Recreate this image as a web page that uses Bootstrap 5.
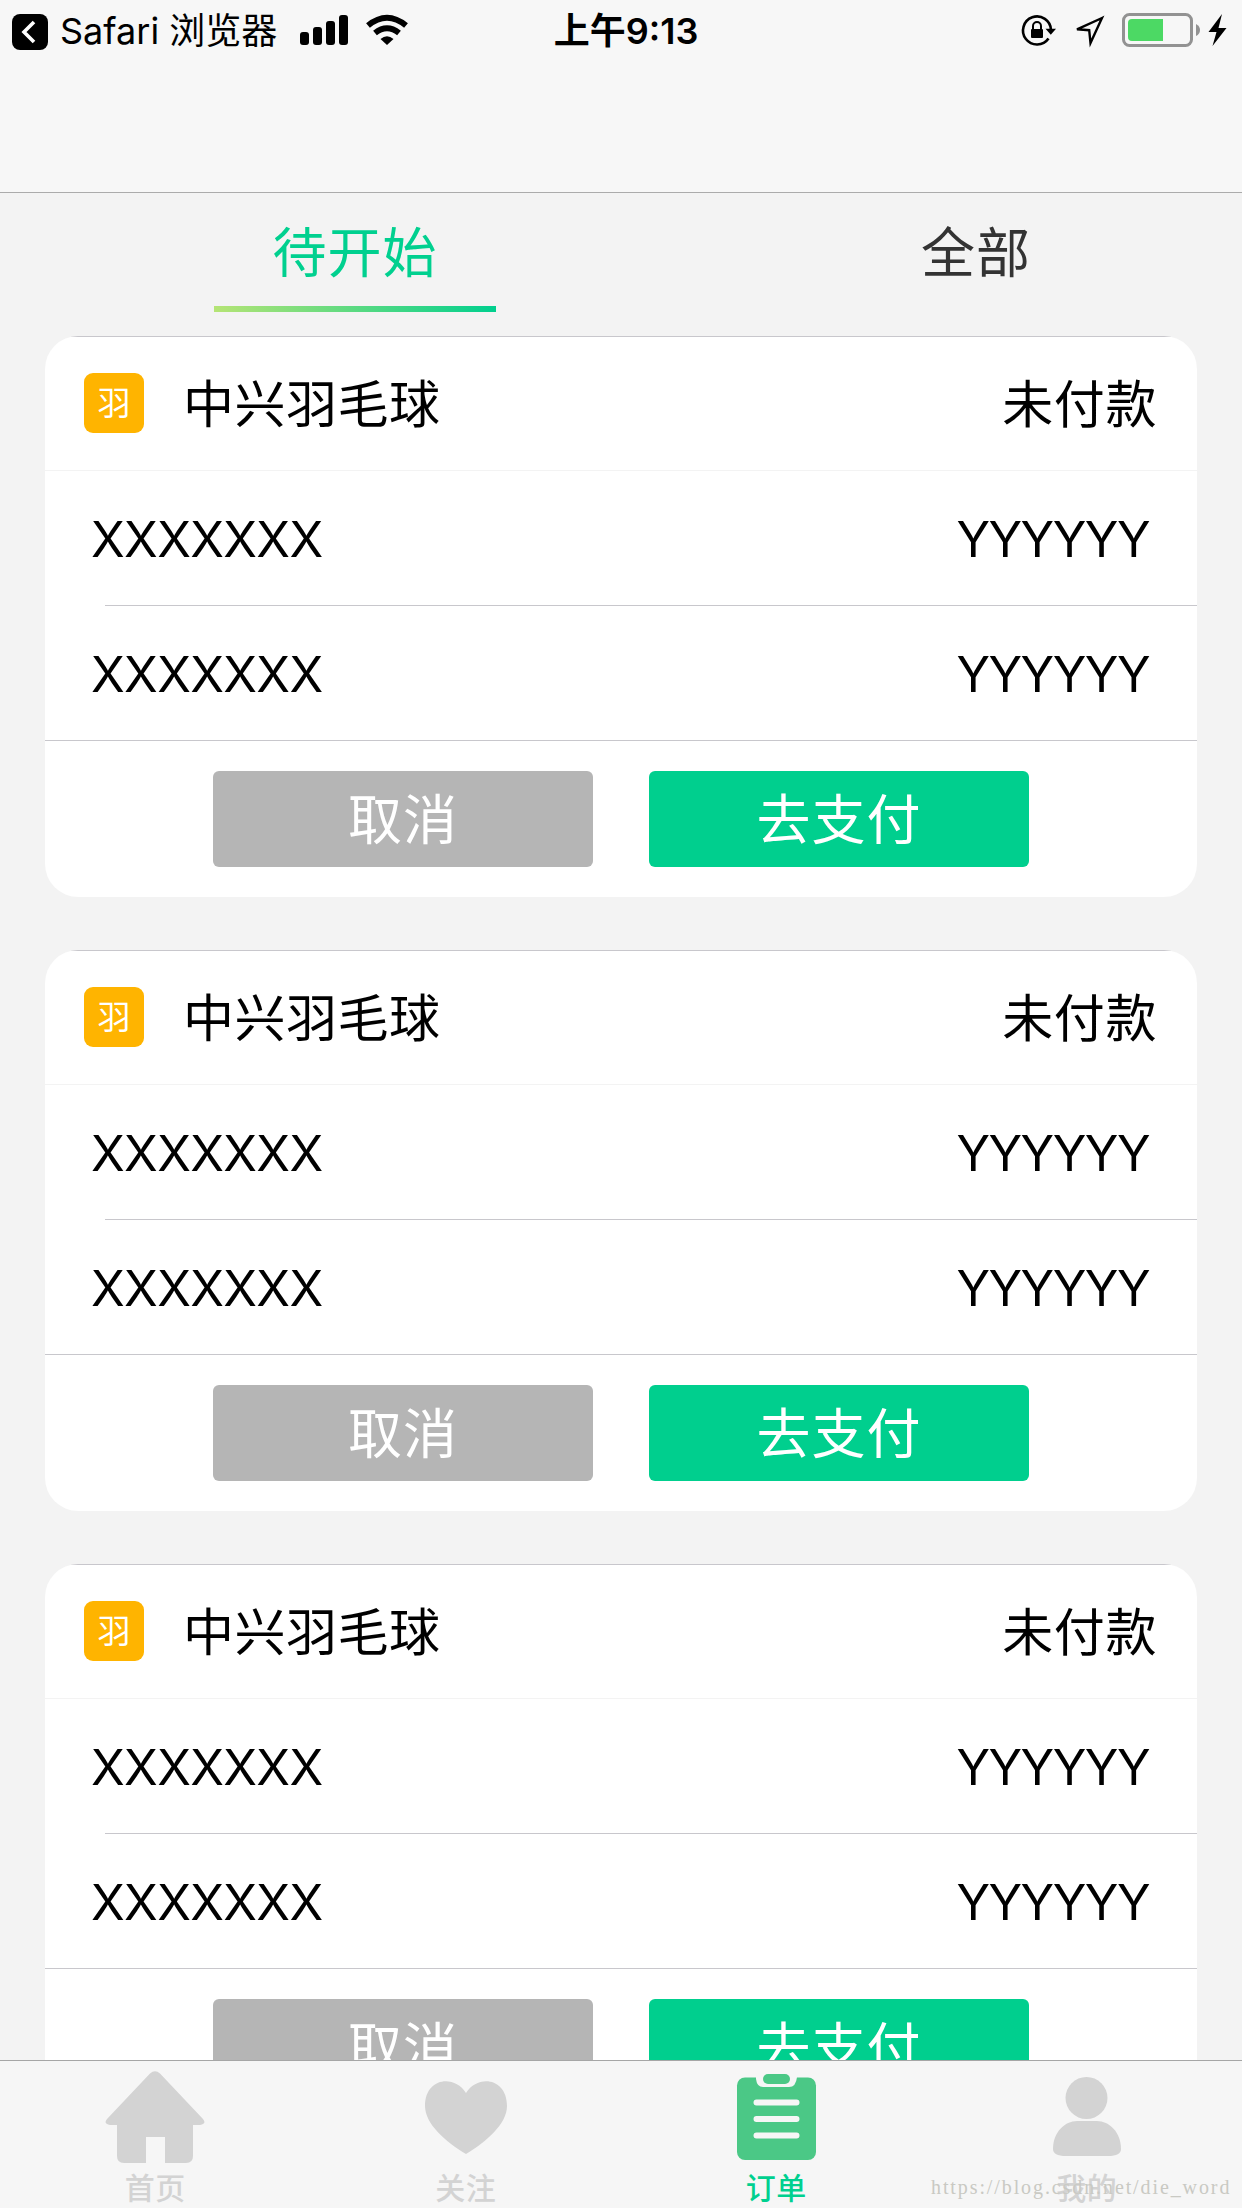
<!DOCTYPE html>
<html lang="zh-CN">
<head>
<meta charset="utf-8">
<meta name="viewport" content="width=device-width, initial-scale=1">
<title>订单</title>
<link href="https://cdn.jsdelivr.net/npm/bootstrap@5.3.0/dist/css/bootstrap.min.css" rel="stylesheet">
<style>
  html { overflow: hidden; }
  body { width: 1242px; height: 2208px; overflow: hidden; background: #f3f3f3; color: #000; font-family: Inter, "Noto Sans CJK SC", sans-serif; line-height: 1; }
  .cjk { font-family: "Noto Sans CJK SC", sans-serif; }
  .top-area { height: 193px; background: #f7f7f7; border-bottom: 1px solid #ababab; }
  .status-line { height: 62px; font-size: 36px; }
  .status-side { flex: 1 1 0; }
  .status-line svg, .tab-bar svg { display: block; flex: none; }
  .back-label { width: 217px; margin-left: 12px; line-height: 62px; white-space: nowrap; }
  .clock { font-weight: 600; line-height: 62px; white-space: nowrap; padding-right: 0; margin-left: 10px; }
  .segments { height: 143px; padding: 0 0 0 214px; font-size: 54px; letter-spacing: 1px; }
  .seg { width: 282px; height: 119px; line-height: 114px; position: relative; text-align: center; color: #333; }
  .seg.chosen { color: #00d08f; }
  .seg.chosen::after { content: ""; position: absolute; left: 0; right: 0; bottom: 0; height: 6px; background: linear-gradient(90deg, #b5e475, #00cf8e); }
  .seg + .seg { margin-left: 339px; }
  .orders { height: 1724px; padding: 0 45px; gap: 53px; overflow: hidden; }
  .order { flex: none; height: 561px; border: 0; border-radius: 33px; background: linear-gradient(#c8c7cc, #c8c7cc) 0 0 / 100% 1px no-repeat #fff; overflow: hidden; color: #000; padding-top: 1px; }
  .order-head { height: 134px; padding: 0 40px 0 39px; border-bottom: 1px solid #f3f3f3; font-size: 51px; }
  .order-head span { margin-bottom: 4px; }
  .order-head .sport-tag { width: 60px; height: 60px; margin-bottom: 1px; border-radius: 9px; background: #ffb400; color: #fff; font-size: 33px; line-height: 57px; text-align: center; }
  .venue { margin-left: 39px; letter-spacing: .5px; }
  .order-state { letter-spacing: .6px; }
  .order-row { height: 135px; padding: 3px 48px 0 46px; font-size: 49.5px; }
  .row-name { letter-spacing: -.7px; }
  .row-value { letter-spacing: -1.5px; }
  .order-row.inset-line { background: linear-gradient(#c8c7cc, #c8c7cc) 60px 100% / 100% 1px no-repeat; }
  .order-row.full-line { border-bottom: 1px solid #c8c7cc; }
  .order-actions { gap: 56px; padding-top: 30px; }
  .order-actions .btn { width: 380px; height: 96px; border: 0; border-radius: 6px; padding: 0 0 5px; color: #fff; font-size: 54px; line-height: 91px; letter-spacing: 1px; }
  .btn-grey { background: #b5b5b5; }
  .btn-green { background: #00cf8e; }
  .tab-bar { height: 148px; background: #f6f6f6; border-top: 1px solid #a6a6a6; color: #d3d3d3; position: relative; }
  .tab-bar .tab { flex: 1 1 0; font-size: 30px; letter-spacing: .5px; font-weight: 500; }
  .tab-bar .tab span { line-height: 34px; }
  .tab-bar .tab.chosen { color: #00d08f; }
  .watermark { position: absolute; left: 931px; top: 114px; font: 20px/24px "Liberation Serif", serif; letter-spacing: 1.9px; color: #c9c9c3; white-space: nowrap; }
</style>
<script src="https://cdn.jsdelivr.net/npm/bootstrap@5.3.0/dist/js/bootstrap.bundle.min.js"></script>
</head>
<body class="d-flex flex-column">
<header class="top-area">
  <div class="status-line d-flex align-items-center">
    <div class="status-side d-flex align-items-center">
      <svg width="48" height="62" viewBox="0 0 48 62"><rect x="12" y="14" width="36" height="36" rx="8"/><path d="M34 22 24 32l10 10" fill="none" stroke="#fff" stroke-width="3.6"/></svg>
      <span class="back-label">Safari 浏览器</span>
      <svg width="135" height="62" viewBox="277 0 135 62"><rect x="300" y="32" width="9" height="13" rx="3"/><rect x="313" y="27" width="9" height="18" rx="3"/><rect x="326" y="21" width="9" height="24" rx="3"/><rect x="339" y="15" width="9" height="30" rx="3"/><g fill="none" stroke="#000" stroke-width="6"><path d="M368 25.500Q387 10 406 25.500"/><path d="M375 33Q387 23.500 399 33"/></g><path d="M380.500 39Q387 33.500 393.500 39L387 45z"/></svg>
    </div>
    <div class="clock text-center">上午9:13</div>
    <div class="status-side d-flex justify-content-end">
      <svg width="232" height="62" viewBox="1010 0 232 62"><path d="M1048.500 38.500A14 14 0 1 1 1051 30" fill="none" stroke="#000" stroke-width="2.600"/><path d="M1045.500 28.800h10.500l-5.200 6z"/><rect x="1031" y="29" width="12" height="9" rx="1"/><path d="M1033 29v-3a4 4 0 0 1 8 0v3" fill="none" stroke="#000" stroke-width="2"/><path d="M1102 18 1077 29.300 1089.200 30.200 1090.500 43z" fill="none" stroke="#000" stroke-width="2.400"/><rect x="1123.500" y="14.500" width="68" height="31" rx="6" fill="none" stroke="#929292" stroke-width="3"/><path d="M1132 19H1163V41H1132Q1128 41 1128 37V23Q1128 19 1132 19z" fill="#4cd964"/><path d="M1196 24q4 2 4 6t-4 6z" fill="#929292"/><path d="M1222 14 1208.500 32h8L1212.500 46 1226.500 28h-8z"/></svg>
    </div>
  </div>
</header>
<nav class="segments cjk d-flex">
  <div class="seg chosen">待开始</div>
  <div class="seg">全部</div>
</nav>
<main class="orders d-flex flex-column">
  <article class="order card">
    <div class="order-head cjk d-flex align-items-center"><span class="sport-tag">羽</span><span class="venue">中兴羽毛球</span><span class="order-state ms-auto">未付款</span></div>
    <div class="order-row inset-line d-flex align-items-center justify-content-between"><span class="row-name">XXXXXXX</span><span class="row-value">YYYYYY</span></div>
    <div class="order-row full-line d-flex align-items-center justify-content-between"><span class="row-name">XXXXXXX</span><span class="row-value">YYYYYY</span></div>
    <div class="order-actions cjk d-flex justify-content-center"><button class="btn btn-grey">取消</button><button class="btn btn-green">去支付</button></div>
  </article>
  <article class="order card">
    <div class="order-head cjk d-flex align-items-center"><span class="sport-tag">羽</span><span class="venue">中兴羽毛球</span><span class="order-state ms-auto">未付款</span></div>
    <div class="order-row inset-line d-flex align-items-center justify-content-between"><span class="row-name">XXXXXXX</span><span class="row-value">YYYYYY</span></div>
    <div class="order-row full-line d-flex align-items-center justify-content-between"><span class="row-name">XXXXXXX</span><span class="row-value">YYYYYY</span></div>
    <div class="order-actions cjk d-flex justify-content-center"><button class="btn btn-grey">取消</button><button class="btn btn-green">去支付</button></div>
  </article>
  <article class="order card">
    <div class="order-head cjk d-flex align-items-center"><span class="sport-tag">羽</span><span class="venue">中兴羽毛球</span><span class="order-state ms-auto">未付款</span></div>
    <div class="order-row inset-line d-flex align-items-center justify-content-between"><span class="row-name">XXXXXXX</span><span class="row-value">YYYYYY</span></div>
    <div class="order-row full-line d-flex align-items-center justify-content-between"><span class="row-name">XXXXXXX</span><span class="row-value">YYYYYY</span></div>
    <div class="order-actions cjk d-flex justify-content-center"><button class="btn btn-grey">取消</button><button class="btn btn-green">去支付</button></div>
  </article>
</main>
<footer class="tab-bar cjk d-flex">
  <div class="tab d-flex flex-column align-items-center">
    <svg width="100" height="108" viewBox="0 0 100 108" fill="#d3d3d3"><path d="M45 12.500Q50 8 55 12.500L98 58Q102 63 95 64H88V95Q88 102 81 102H60V76H41V102H19Q12 102 12 95V64H5Q-2 63 2 58z"/></svg><span>首页</span>
  </div>
  <div class="tab d-flex flex-column align-items-center">
    <svg width="100" height="108" viewBox="0 0 100 108" fill="#d3d3d3"><path d="M50 32C38 13 9 17 9 45C9 63 30 81 50 93C70 81 91 63 91 45C91 17 62 13 50 32z"/></svg><span>关注</span>
  </div>
  <div class="tab chosen d-flex flex-column align-items-center">
    <svg width="100" height="108" viewBox="0 0 100 108"><rect x="11" y="16.500" width="79" height="82.500" rx="8" fill="#4bc886"/><path d="M30 16V18Q31 26 37 26H63Q70 26 71 16z" fill="#f6f6f6"/><rect x="37" y="13" width="27" height="10" rx="5" fill="#4bc886"/><path d="M30.500 41.500h40M30.500 58h40M30.500 74.500h40" stroke="#f6f6f6" stroke-width="6" stroke-linecap="round"/></svg><span>订单</span>
  </div>
  <div class="tab d-flex flex-column align-items-center">
    <svg width="100" height="108" viewBox="0 0 100 108" fill="#d3d3d3"><circle cx="49.500" cy="37" r="21"/><path d="M16 88C16 71 28 60 40 60H60C72 60 84 71 84 88Q84 95 71 95H29Q16 95 16 88z"/></svg><span>我的</span>
  </div>
  <div class="watermark">https://blog.csdn.net/die_word</div>
</footer>
</body>
</html>
